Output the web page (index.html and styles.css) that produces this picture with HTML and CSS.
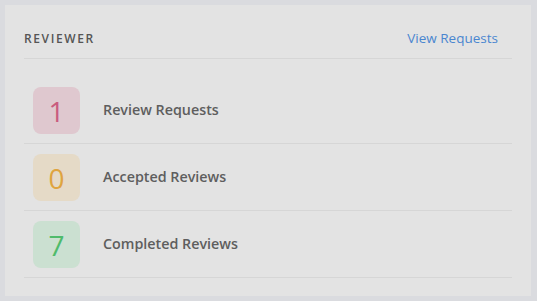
FILE: index.html
```html
<!DOCTYPE html>
<html lang="en">

<head>
  <meta charset="UTF-8" />
  <title>Reviewer</title>
  <link rel="stylesheet" href="styles.css">
</head>

<body>

  <div class="card">
    <div class="card-header">
      <h3>Reviewer</h3>
      <a href="#" class="view-link">View Requests</a>
    </div>

    <ul class="stats">
      <li class="stat">
        <span class="count pink">1</span>
        <span class="label">Review Requests</span>
      </li>
      <li class="stat">
        <span class="count amber">0</span>
        <span class="label">Accepted Reviews</span>
      </li>
      <li class="stat">
        <span class="count green">7</span>
        <span class="label">Completed Reviews</span>
      </li>
    </ul>
  </div>

</body>

</html>
```

FILE: styles.css
```css
body {
  margin: 0;
  padding: 5px 6px 5px 5px;
  background: #dadbdf;
  font-family: "Open Sans", Arial, sans-serif;
}

.card {
  background: #e3e3e3;
  padding: 0 19px 18px 19px;
  height: 291px;
  box-sizing: border-box;
}

.card-header {
  display: flex;
  justify-content: space-between;
  align-items: baseline;
  height: 54px;
  box-sizing: border-box;
  padding: 25px 14px 0 0;
  border-bottom: 1px solid #d6d6d6;
}

.card-header h3 {
  margin: 0;
  font-size: 12px;
  line-height: 18px;
  font-weight: 600;
  letter-spacing: 1.6px;
  text-transform: uppercase;
  color: #555;
}

.view-link {
  color: #4a86d0;
  text-decoration: none;
  font-size: 13.5px;
  margin-top: -4px;
}

.stats {
  list-style: none;
  margin: 0;
  padding: 18px 0 0 0;
}

.stat {
  display: flex;
  align-items: center;
  gap: 23px;
  padding: 10px 9px 9px 9px;
  border-bottom: 1px solid #d6d6d6;
}

.count {
  width: 47px;
  height: 47px;
  border-radius: 8px;
  display: flex;
  align-items: center;
  justify-content: center;
  font-size: 28px;
  font-weight: 400;
}

.pink {
  background: #dfc8cf;
  color: #c95b7e;
}

.amber {
  background: #e5dac7;
  color: #dfa43f;
}

.green {
  background: #cbe0d1;
  color: #4fbb6b;
}

.label {
  font-size: 14.3px;
  font-weight: 600;
  color: #5e5e5e;
  margin-top: -2px;
}
```
